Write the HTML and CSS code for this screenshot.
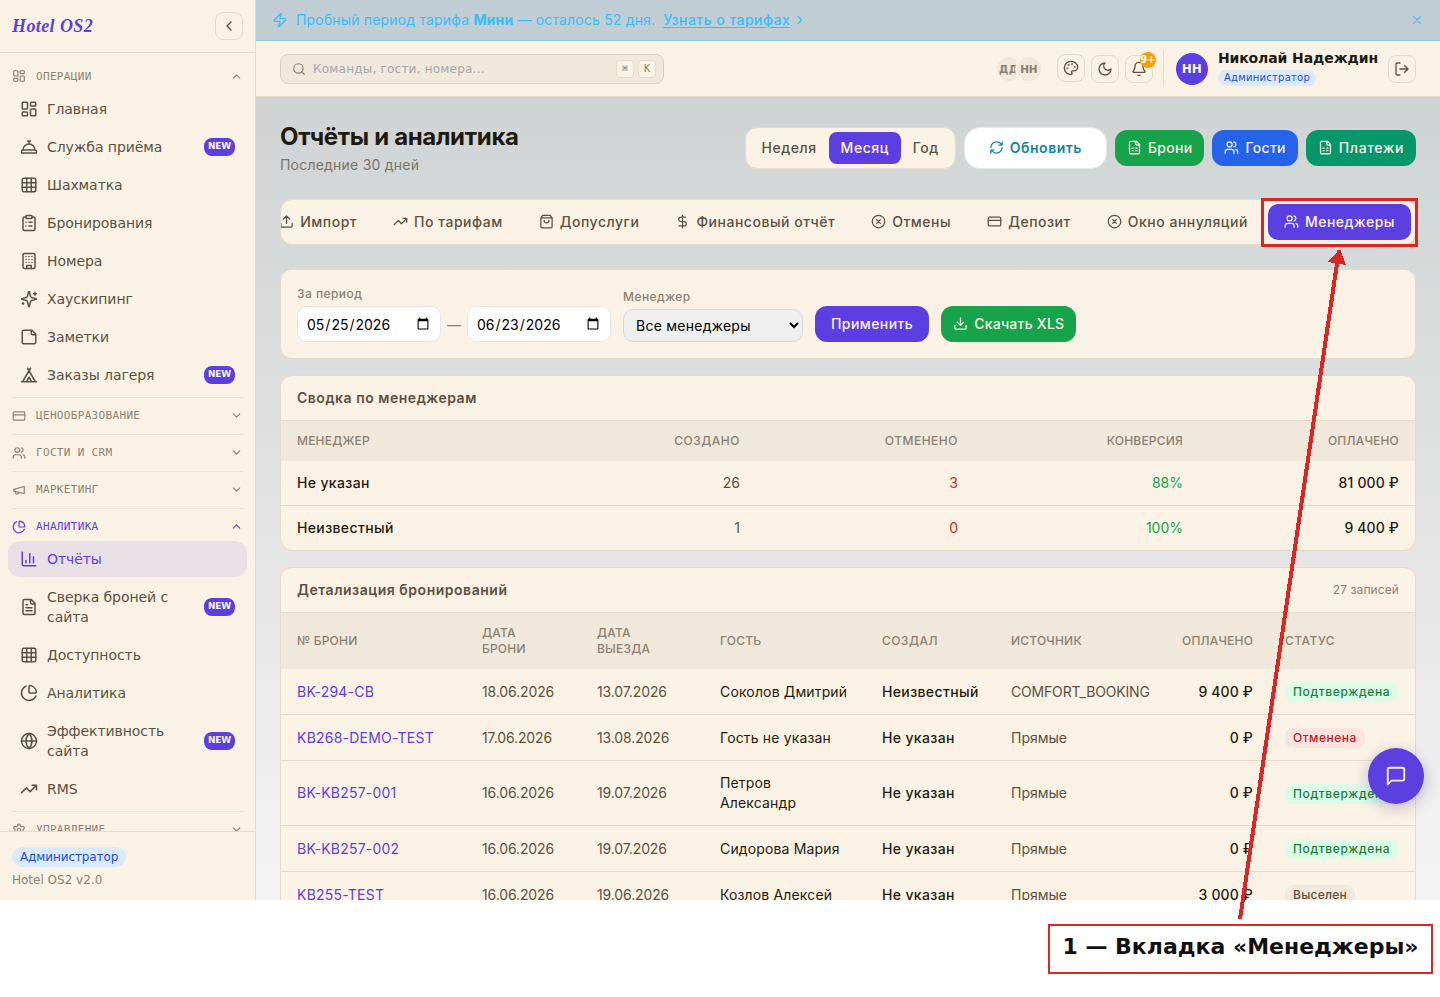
FILE: index.html
```html
<!DOCTYPE html>
<html lang="ru">
<head>
<meta charset="utf-8">
<title>Hotel OS2 — Отчёты и аналитика</title>
<link rel="stylesheet" href="styles.css">
</head>
<body>
<svg class="sprite" aria-hidden="true">
<symbol id="dash" viewBox="0 0 24 24"><rect width="7" height="9" x="3" y="3" rx="1"/><rect width="7" height="5" x="14" y="3" rx="1"/><rect width="7" height="9" x="14" y="12" rx="1"/><rect width="7" height="5" x="3" y="16" rx="1"/></symbol>
<symbol id="concierge" viewBox="0 0 24 24"><path d="M3 20a1 1 0 0 1-1-1v-1a2 2 0 0 1 2-2h16a2 2 0 0 1 2 2v1a1 1 0 0 1-1 1ZM20 16a8 8 0 1 0-16 0M12 4v4M10 4h4"/></symbol>
<symbol id="grid" viewBox="0 0 24 24"><rect width="18" height="18" x="3" y="3" rx="2"/><path d="M3 9h18M3 15h18M9 3v18M15 3v18"/></symbol>
<symbol id="clip" viewBox="0 0 24 24"><rect width="8" height="4" x="8" y="2" rx="1"/><path d="M16 4h2a2 2 0 0 1 2 2v14a2 2 0 0 1-2 2H6a2 2 0 0 1-2-2V6a2 2 0 0 1 2-2h2M12 11h4M12 16h4M8 11h.01M8 16h.01"/></symbol>
<symbol id="building" viewBox="0 0 24 24"><rect width="16" height="20" x="4" y="2" rx="2"/><path d="M9 22v-4h6v4M8 6h.01M16 6h.01M12 6h.01M12 10h.01M12 14h.01M16 10h.01M16 14h.01M8 10h.01M8 14h.01"/></symbol>
<symbol id="sparkles" viewBox="0 0 24 24"><path d="M9.937 15.5A2 2 0 0 0 8.5 14.063l-6.135-1.582a.5.5 0 0 1 0-.962L8.5 9.936A2 2 0 0 0 9.937 8.5l1.582-6.135a.5.5 0 0 1 .963 0L14.063 8.5A2 2 0 0 0 15.5 9.937l6.135 1.581a.5.5 0 0 1 0 .964L15.5 14.063a2 2 0 0 0-1.437 1.437l-1.582 6.135a.5.5 0 0 1-.963 0zM20 3v4M22 5h-4M4 17v2M5 18H3"/></symbol>
<symbol id="note" viewBox="0 0 24 24"><path d="M16 3H5a2 2 0 0 0-2 2v14a2 2 0 0 0 2 2h14a2 2 0 0 0 2-2V8ZM15 3v4a2 2 0 0 0 2 2h4"/></symbol>
<symbol id="tent" viewBox="0 0 24 24"><path d="M3.5 21 14 3M20.5 21 10 3M15.5 21 12 15l-3.5 6M2 21h20"/></symbol>
<symbol id="card" viewBox="0 0 24 24"><rect width="20" height="14" x="2" y="5" rx="2"/><path d="M2 10h20"/></symbol>
<symbol id="users" viewBox="0 0 24 24"><path d="M16 21v-2a4 4 0 0 0-4-4H6a4 4 0 0 0-4 4v2M22 21v-2a4 4 0 0 0-3-3.87M16 3.13a4 4 0 0 1 0 7.75"/><circle cx="9" cy="7" r="4"/></symbol>
<symbol id="mega" viewBox="0 0 24 24"><path d="m3 11 18-5v12L3 14v-3zM11.6 16.8a3 3 0 1 1-5.8-1.6"/></symbol>
<symbol id="pie" viewBox="0 0 24 24"><path d="M21 12c.552 0 1.005-.449.95-.998a10 10 0 0 0-8.953-8.951c-.55-.055-.998.398-.998.95v8a1 1 0 0 0 1 1zM21.21 15.89A10 10 0 1 1 8 2.83"/></symbol>
<symbol id="bars" viewBox="0 0 24 24"><path d="M3 3v16a2 2 0 0 0 2 2h16M18 17V9M13 17V5M8 17v-3"/></symbol>
<symbol id="doc" viewBox="0 0 24 24"><path d="M15 2H6a2 2 0 0 0-2 2v16a2 2 0 0 0 2 2h12a2 2 0 0 0 2-2V7ZM14 2v4a2 2 0 0 0 2 2h4M10 9H8M16 13H8M16 17H8"/></symbol>
<symbol id="sheet" viewBox="0 0 24 24"><path d="M15 2H6a2 2 0 0 0-2 2v16a2 2 0 0 0 2 2h12a2 2 0 0 0 2-2V7ZM14 2v4a2 2 0 0 0 2 2h4M8 13h2M14 13h2M8 17h2M14 17h2"/></symbol>
<symbol id="globe" viewBox="0 0 24 24"><circle cx="12" cy="12" r="10"/><path d="M12 2a14.5 14.5 0 0 0 0 20 14.5 14.5 0 0 0 0-20M2 12h20"/></symbol>
<symbol id="trend" viewBox="0 0 24 24"><path d="M22 7 13.5 15.5 8.5 10.5 2 17M16 7h6v6"/></symbol>
<symbol id="gear" viewBox="0 0 24 24"><path d="M12.22 2h-.44a2 2 0 0 0-2 2v.18a2 2 0 0 1-1 1.73l-.43.25a2 2 0 0 1-2 0l-.15-.08a2 2 0 0 0-2.73.73l-.22.38a2 2 0 0 0 .73 2.73l.15.1a2 2 0 0 1 1 1.72v.51a2 2 0 0 1-1 1.74l-.15.09a2 2 0 0 0-.73 2.73l.22.38a2 2 0 0 0 2.73.73l.15-.08a2 2 0 0 1 2 0l.43.25a2 2 0 0 1 1 1.73V20a2 2 0 0 0 2 2h.44a2 2 0 0 0 2-2v-.18a2 2 0 0 1 1-1.73l.43-.25a2 2 0 0 1 2 0l.15.08a2 2 0 0 0 2.73-.73l.22-.39a2 2 0 0 0-.73-2.73l-.15-.08a2 2 0 0 1-1-1.74v-.5a2 2 0 0 1 1-1.74l.15-.09a2 2 0 0 0 .73-2.73l-.22-.38a2 2 0 0 0-2.73-.73l-.15.08a2 2 0 0 1-2 0l-.43-.25a2 2 0 0 1-1-1.73V4a2 2 0 0 0-2-2z"/><circle cx="12" cy="12" r="3"/></symbol>
<symbol id="zap" viewBox="0 0 24 24"><path d="M4 14a1 1 0 0 1-.78-1.63l9.9-10.2a.5.5 0 0 1 .86.46l-1.92 6.02A1 1 0 0 0 13 10h7a1 1 0 0 1 .78 1.63l-9.9 10.2a.5.5 0 0 1-.86-.46l1.92-6.02A1 1 0 0 0 11 14z"/></symbol>
<symbol id="palette" viewBox="0 0 24 24"><circle cx="13.5" cy="6.5" r=".5"/><circle cx="17.5" cy="10.5" r=".5"/><circle cx="8.5" cy="7.5" r=".5"/><circle cx="6.5" cy="12.5" r=".5"/><path d="M12 2C6.5 2 2 6.5 2 12s4.5 10 10 10c.926 0 1.648-.746 1.648-1.688 0-.437-.18-.835-.437-1.125-.29-.289-.438-.652-.438-1.125a1.64 1.64 0 0 1 1.668-1.668h1.996c3.051 0 5.555-2.503 5.555-5.554C21.965 6.012 17.461 2 12 2z"/></symbol>
<symbol id="moon" viewBox="0 0 24 24"><path d="M12 3a6 6 0 0 0 9 9 9 9 0 1 1-9-9Z"/></symbol>
<symbol id="bell" viewBox="0 0 24 24"><path d="M10.268 21a2 2 0 0 0 3.464 0M3.262 15.326A1 1 0 0 0 4 17h16a1 1 0 0 0 .74-1.673C19.41 13.956 18 12.499 18 8A6 6 0 0 0 6 8c0 4.499-1.411 5.956-2.738 7.326"/></symbol>
<symbol id="logout" viewBox="0 0 24 24"><path d="M9 21H5a2 2 0 0 1-2-2V5a2 2 0 0 1 2-2h4M16 17l5-5-5-5M21 12H9"/></symbol>
<symbol id="refresh" viewBox="0 0 24 24"><path d="M3 12a9 9 0 0 1 9-9 9.75 9.75 0 0 1 6.74 2.74L21 8M21 3v5h-5M21 12a9 9 0 0 1-9 9 9.75 9.75 0 0 1-6.74-2.74L3 16M8 16H3v5"/></symbol>
<symbol id="upload" viewBox="0 0 24 24"><path d="M21 15v4a2 2 0 0 1-2 2H5a2 2 0 0 1-2-2v-4M17 8l-5-5-5 5M12 3v12"/></symbol>
<symbol id="download" viewBox="0 0 24 24"><path d="M21 15v4a2 2 0 0 1-2 2H5a2 2 0 0 1-2-2v-4M7 10l5 5 5-5M12 15V3"/></symbol>
<symbol id="bag" viewBox="0 0 24 24"><path d="M6 2 3 6v14a2 2 0 0 0 2 2h14a2 2 0 0 0 2-2V6l-3-4ZM3 6h18M16 10a4 4 0 0 1-8 0"/></symbol>
<symbol id="dollar" viewBox="0 0 24 24"><path d="M12 2v20M17 5H9.5a3.5 3.5 0 0 0 0 7h5a3.5 3.5 0 0 1 0 7H6"/></symbol>
<symbol id="cx" viewBox="0 0 24 24"><circle cx="12" cy="12" r="10"/><path d="m15 9-6 6M9 9l6 6"/></symbol>
<symbol id="msg" viewBox="0 0 24 24"><path d="M21 15a2 2 0 0 1-2 2H7l-4 4V5a2 2 0 0 1 2-2h14a2 2 0 0 1 2 2z"/></symbol>
<symbol id="search" viewBox="0 0 24 24"><circle cx="11" cy="11" r="8"/><path d="m21 21-4.3-4.3"/></symbol>
<symbol id="x" viewBox="0 0 24 24"><path d="M18 6 6 18M6 6l12 12"/></symbol>
<symbol id="left" viewBox="0 0 24 24"><path d="m15 18-6-6 6-6"/></symbol>
<symbol id="right" viewBox="0 0 24 24"><path d="m9 18 6-6-6-6"/></symbol>
<symbol id="up" viewBox="0 0 24 24"><path d="m18 15-6-6-6 6"/></symbol>
<symbol id="down" viewBox="0 0 24 24"><path d="m6 9 6 6 6-6"/></symbol>
</svg>

<div class="app">
<aside class="sidebar">
  <div class="brand"><span class="logo">Hotel OS2</span><button class="sq"><svg class="i16"><use href="#left"/></svg></button></div>
  <nav class="nav">
    <section class="group">
      <h3 class="group-title"><svg class="i14"><use href="#dash"/></svg><span>ОПЕРАЦИИ</span><svg class="i13"><use href="#up"/></svg></h3>
      <a class="item"><svg class="i18"><use href="#dash"/></svg><span>Главная</span></a>
      <a class="item"><svg class="i18"><use href="#concierge"/></svg><span>Служба приёма</span><b class="new">NEW</b></a>
      <a class="item"><svg class="i18"><use href="#grid"/></svg><span>Шахматка</span></a>
      <a class="item"><svg class="i18"><use href="#clip"/></svg><span>Бронирования</span></a>
      <a class="item"><svg class="i18"><use href="#building"/></svg><span>Номера</span></a>
      <a class="item"><svg class="i18"><use href="#sparkles"/></svg><span>Хаускипинг</span></a>
      <a class="item"><svg class="i18"><use href="#note"/></svg><span>Заметки</span></a>
      <a class="item"><svg class="i18"><use href="#tent"/></svg><span>Заказы лагеря</span><b class="new">NEW</b></a>
    </section>
    <section class="group second"><h3 class="group-title"><svg class="i14"><use href="#card"/></svg><span>ЦЕНООБРАЗОВАНИЕ</span><svg class="i13"><use href="#down"/></svg></h3></section>
    <section class="group"><h3 class="group-title"><svg class="i14"><use href="#users"/></svg><span>ГОСТИ И CRM</span><svg class="i13"><use href="#down"/></svg></h3></section>
    <section class="group"><h3 class="group-title"><svg class="i14"><use href="#mega"/></svg><span>МАРКЕТИНГ</span><svg class="i13"><use href="#down"/></svg></h3></section>
    <section class="group">
      <h3 class="group-title current"><svg class="i14"><use href="#pie"/></svg><span>АНАЛИТИКА</span><svg class="i13"><use href="#up"/></svg></h3>
      <a class="item active"><svg class="i18"><use href="#bars"/></svg><span>Отчёты</span></a>
      <a class="item"><svg class="i18"><use href="#doc"/></svg><span>Сверка броней с сайта</span><b class="new">NEW</b></a>
      <a class="item"><svg class="i18"><use href="#grid"/></svg><span>Доступность</span></a>
      <a class="item"><svg class="i18"><use href="#pie"/></svg><span>Аналитика</span></a>
      <a class="item"><svg class="i18"><use href="#globe"/></svg><span>Эффективность сайта</span><b class="new">NEW</b></a>
      <a class="item"><svg class="i18"><use href="#trend"/></svg><span>RMS</span></a>
    </section>
    <section class="group last"><h3 class="group-title"><svg class="i14"><use href="#gear"/></svg><span>УПРАВЛЕНИЕ</span><svg class="i13"><use href="#down"/></svg></h3></section>
  </nav>
  <footer class="side-foot"><span class="role">Администратор</span><span class="version">Hotel OS2 v2.0</span></footer>
</aside>

<div class="main">
  <div class="trial"><svg class="i16"><use href="#zap"/></svg><span class="trial-text">Пробный период тарифа <b>Мини</b> — осталось 52 дня.</span><a class="trial-link">Узнать о тарифах</a><svg class="i14 trial-arrow"><use href="#right"/></svg><svg class="i14 trial-close"><use href="#x"/></svg></div>
  <header class="topbar">
    <div class="search"><svg class="i14"><use href="#search"/></svg><span>Команды, гости, номера...</span><kbd>⌘</kbd><kbd>K</kbd></div>
    <div class="online"><i>ДД</i><i>НН</i></div>
    <button class="sq lift"><svg class="i16"><use href="#palette"/></svg></button>
    <button class="sq"><svg class="i16"><use href="#moon"/></svg></button>
    <button class="sq bell"><svg class="i16"><use href="#bell"/></svg><b class="count">9+</b></button>
    <div class="user"><span class="avatar">НН</span><div class="who"><strong>Николай Надеждин</strong><span class="role small">Администратор</span></div></div>
    <button class="sq"><svg class="i16"><use href="#logout"/></svg></button>
  </header>

  <main class="content">
    <div class="page-head">
      <div class="titles"><h1>Отчёты и аналитика</h1><p>Последние 30 дней</p></div>
      <div class="period"><span>Неделя</span><span class="on">Месяц</span><span>Год</span></div>
      <button class="btn refresh"><svg class="i15"><use href="#refresh"/></svg>Обновить</button>
      <button class="btn green"><svg class="i15"><use href="#sheet"/></svg>Брони</button>
      <button class="btn blue"><svg class="i15"><use href="#users"/></svg>Гости</button>
      <button class="btn teal"><svg class="i15"><use href="#sheet"/></svg>Платежи</button>
    </div>

    <div class="tabs">
      <a class="tab"><svg class="i15"><use href="#upload"/></svg>Импорт</a>
      <a class="tab"><svg class="i15"><use href="#trend"/></svg>По тарифам</a>
      <a class="tab"><svg class="i15"><use href="#bag"/></svg>Допуслуги</a>
      <a class="tab"><svg class="i15"><use href="#dollar"/></svg>Финансовый отчёт</a>
      <a class="tab"><svg class="i15"><use href="#cx"/></svg>Отмены</a>
      <a class="tab"><svg class="i15"><use href="#card"/></svg>Депозит</a>
      <a class="tab"><svg class="i15"><use href="#cx"/></svg>Окно аннуляций</a>
      <a class="tab on"><svg class="i15"><use href="#users"/></svg>Менеджеры</a>
    </div>

    <div class="card filters">
      <div class="field"><label>За период</label><div class="range"><input type="date" value="2026-05-25"><span>—</span><input type="date" value="2026-06-23"></div></div>
      <div class="field manager"><label>Менеджер</label><select><option>Все менеджеры</option></select></div>
      <button class="btn primary">Применить</button>
      <button class="btn green xls"><svg class="i15"><use href="#download"/></svg>Скачать XLS</button>
    </div>

    <div class="card">
      <div class="card-head"><h2>Сводка по менеджерам</h2></div>
      <table class="summary">
        <colgroup><col class="s1"><col class="s2"><col class="s3"><col class="s4"><col></colgroup>
        <thead><tr><th>МЕНЕДЖЕР</th><th class="r wide">СОЗДАНО</th><th class="r wide">ОТМЕНЕНО</th><th class="r">КОНВЕРСИЯ</th><th class="r">ОПЛАЧЕНО</th></tr></thead>
        <tbody>
          <tr><td class="strong">Не указан</td><td class="r">26</td><td class="r red">3</td><td class="r ok">88%</td><td class="r sum">81 000 ₽</td></tr>
          <tr><td class="strong">Неизвестный</td><td class="r">1</td><td class="r red">0</td><td class="r ok">100%</td><td class="r sum">9 400 ₽</td></tr>
        </tbody>
      </table>
    </div>

    <div class="card">
      <div class="card-head"><h2>Детализация бронирований</h2><span>27 записей</span></div>
      <table class="detail">
        <colgroup><col class="d1"><col class="d2"><col class="d3"><col class="d4"><col class="d5"><col class="d6"><col class="d7"><col></colgroup>
        <thead><tr><th>№ БРОНИ</th><th>ДАТА<br>БРОНИ</th><th>ДАТА<br>ВЫЕЗДА</th><th>ГОСТЬ</th><th class="wide">СОЗДАЛ</th><th>ИСТОЧНИК</th><th class="r">ОПЛАЧЕНО</th><th class="wide">СТАТУС</th></tr></thead>
        <tbody>
          <tr><td class="code">BK-294-CB</td><td class="date">18.06.2026</td><td class="date">13.07.2026</td><td class="guest">Соколов Дмитрий</td><td class="strong">Неизвестный</td><td class="source">COMFORT_BOOKING</td><td class="r sum">9 400 ₽</td><td><span class="tag good">Подтверждена</span></td></tr>
          <tr><td class="code">KB268-DEMO-TEST</td><td class="date">17.06.2026</td><td class="date">13.08.2026</td><td class="guest">Гость не указан</td><td class="strong">Не указан</td><td>Прямые</td><td class="r sum">0 ₽</td><td><span class="tag bad">Отменена</span></td></tr>
          <tr><td class="code">BK-KB257-001</td><td class="date">16.06.2026</td><td class="date">19.07.2026</td><td class="guest">Петров<br>Александр</td><td class="strong">Не указан</td><td>Прямые</td><td class="r sum">0 ₽</td><td><span class="tag good">Подтверждена</span></td></tr>
          <tr><td class="code">BK-KB257-002</td><td class="date">16.06.2026</td><td class="date">19.07.2026</td><td class="guest">Сидорова Мария</td><td class="strong">Не указан</td><td>Прямые</td><td class="r sum">0 ₽</td><td><span class="tag good">Подтверждена</span></td></tr>
          <tr><td class="code">KB255-TEST</td><td class="date">16.06.2026</td><td class="date">19.06.2026</td><td class="guest">Козлов Алексей</td><td class="strong">Не указан</td><td>Прямые</td><td class="r sum">3 000 ₽</td><td><span class="tag out">Выселен</span></td></tr>
        </tbody>
      </table>
    </div>
  </main>
</div>
<button class="chat"><svg><use href="#msg"/></svg></button>
</div>

<svg class="callout-lines" width="1440" height="997" shape-rendering="crispEdges">
  <rect x="1262.5" y="199.5" width="154" height="46"/>
  <path d="M1240 919 1339 250"/>
  <path class="head" d="M1340 249 1328 262 1346 265Z"/>
</svg>
<div class="callout">1 — Вкладка «Менеджеры»</div>
</body>
</html>
```

FILE: styles.css
```css
* { box-sizing: border-box; }
body { margin: 0; background: #fff; font-family: "DejaVu Sans", sans-serif; color: #1f1a10; }
h1, h2, h3, p { margin: 0; }
button { font: inherit; padding: 0; border: 0; }
svg { fill: none; stroke: currentColor; stroke-width: 2; stroke-linecap: round; stroke-linejoin: round; flex: none; }
.sprite { display: none; }
.i13 { width: 13px; height: 13px; }
.i14 { width: 14px; height: 14px; }
.i15 { width: 15px; height: 15px; }
.i16 { width: 16px; height: 16px; }
.i18 { width: 18px; height: 18px; }

.app { position: relative; display: flex; height: 900px; overflow: hidden; background: linear-gradient(180deg, #cccfd1 0, #d5d8d8 220px, #e5e5e5 560px, #f4f4f4 900px); }

.sidebar { width: 256px; flex: none; display: flex; flex-direction: column; background: #faf3e5; border-right: 1px solid #e3dac9; }
.brand { height: 53px; flex: none; display: flex; align-items: center; justify-content: space-between; padding: 0 12px; border-bottom: 1px solid #e3dac9; }
.logo { font: italic bold 18px "Liberation Serif", serif; letter-spacing: .4px; color: #5b3fe0; }
.sq { width: 28px; height: 28px; flex: none; display: flex; align-items: center; justify-content: center; border: 1px solid #e3dac9; border-radius: 8px; background: #faf3e5; color: #5a5142; }
.nav { flex: 1; min-height: 0; overflow: hidden; padding: 5px 8px 0; }
.group { display: flex; flex-direction: column; gap: 2px; }
.group-title { display: flex; align-items: center; gap: 10px; height: 36px; margin: 0 4px -2px; border-top: 1px solid #ece3d3; font: 11px "DejaVu Sans Mono", monospace; letter-spacing: .33px; color: #8a8171; }
.group:first-child .group-title { border-color: transparent; height: 35px; margin-bottom: -4px; }
.group-title span { flex: 1; }
.group + .group { margin-top: 3px; }
.group + .second, .group + .last { margin-top: 4px; }
.group .current { color: #5b3fe0; margin-bottom: -5px; }
.item { display: flex; align-items: center; min-height: 36px; padding: 8px 12px; gap: 9px; border-radius: 12px; font-size: 14px; line-height: 20px; letter-spacing: -.07px; color: #5a5142; }
.item span { flex: 1; }
.item.active { background: #e9e0e6; color: #5b3fe0; }
.new { width: 31px; height: 18px; border-radius: 8px; background: #5b3fe0; color: #faf3e5; font: bold 9px/16px "DejaVu Sans", sans-serif; letter-spacing: -.2px; text-align: center; }
.side-foot { height: 69px; flex: none; padding: 15px 12px 0; display: flex; flex-direction: column; align-items: flex-start; gap: 5px; border-top: 1px solid #e3dac9; }
.role { height: 20px; padding: 0 8px; border-radius: 10px; background: #dbeafe; color: #1d4ed8; font-size: 12px; line-height: 20px; letter-spacing: -.1px; }
.version { font-size: 12px; line-height: 16px; color: #8a8171; }

.main { flex: 1; min-width: 0; display: flex; flex-direction: column; }
.trial { height: 41px; flex: none; display: flex; align-items: center; padding: 0 16px 1px; background: #c0cdd4; border-bottom: 1px solid #8cc8e2; color: #38bdf8; font: 14px "Inter", sans-serif; letter-spacing: .17px; }
.trial-text { margin: 0 8px; }
.trial-link { font-weight: 500; letter-spacing: .46px; text-decoration: underline; text-underline-offset: 2px; }
.trial-arrow { margin-left: 3px; }
.trial-close { margin-left: auto; opacity: .8; }
.topbar { height: 56px; flex: none; display: flex; align-items: center; padding: 0 24px; background: #faf3e5; border-bottom: 1px solid #e3dac9; }
.search { width: 384px; height: 30px; display: flex; align-items: center; gap: 4px; padding: 0 7px 0 11px; border: 1px solid #d8cfc0; border-radius: 8px; background: #f0e8db; color: #8a8171; font-size: 12px; letter-spacing: .22px; }
.search span { flex: 1; margin-left: 3px; color: #a3a7ad; }
kbd { width: 18px; height: 18px; border: 1px solid #e3dac9; border-radius: 4px; background: #faf3e5; font: 10px/16px "DejaVu Sans Mono", monospace; letter-spacing: 0; text-align: center; }
.online { display: flex; margin: 0 16px 0 auto; }
.online i { width: 24px; height: 24px; border-radius: 50%; background: #f0e8db; color: #8a8171; font: bold 10.5px/24px "DejaVu Sans", sans-serif; letter-spacing: .4px; text-align: center; }
.online i + i { margin-left: -4px; letter-spacing: -.2px; box-shadow: 0 0 0 2px #faf3e5; }
.topbar .sq { margin-right: 6px; }
.topbar .lift { margin-bottom: 2px; }
.bell { position: relative; }
.count { position: absolute; top: -4px; right: -4px; width: 16px; height: 16px; border-radius: 50%; background: #f59e0b; color: #fff; font: bold 10px/15px "DejaVu Sans", sans-serif; text-align: center; }
.user { display: flex; align-items: center; gap: 10px; height: 37px; margin-left: 4px; margin-right: 10px; padding-left: 12px; border-left: 1px solid #e3dac9; }
.avatar { width: 32px; height: 32px; border-radius: 50%; background: #5b3fe0; color: #faf3e5; font: bold 12px/32px "DejaVu Sans", sans-serif; text-align: center; }
.who { display: flex; flex-direction: column; align-items: flex-start; }
.who strong { font-size: 14px; line-height: 20px; letter-spacing: -.1px; margin-top: -3px; }
.role.small { height: 16px; padding: 0 6px; font-size: 10px; line-height: 16px; letter-spacing: .25px; margin-top: 2px; }
.topbar .sq:last-child { margin-right: 0; }

.content { flex: 1; min-height: 0; overflow: hidden; padding: 24px 24px 0; font-family: "Inter", sans-serif; font-size: 14px; }
.page-head { display: flex; align-items: center; height: 54px; gap: 8px; }
.titles { flex: 1; }
.titles h1 { font-size: 24px; line-height: 32px; font-weight: 700; letter-spacing: -.34px; }
.titles p { line-height: 20px; margin-top: 2px; letter-spacing: .22px; color: #7a7466; }
.period { display: flex; height: 42px; padding: 4px; border: 1px solid #e3dac9; border-radius: 12px; background: #faf3e5; color: #5a5142; font-weight: 500; letter-spacing: .52px; }
.period span { padding: 0 12px; line-height: 32px; border-radius: 8px; }
.period .on { background: #5b3fe0; color: #faf3e5; }
.btn { display: flex; align-items: center; gap: 6px; height: 36px; padding: 0 12px 1px; border-radius: 12px; color: #faf3e5; font-weight: 500; letter-spacing: .3px; }
.refresh { height: 42px; padding: 0 24px 1px; border: 1px solid #e5e7eb; border-radius: 16px; background: #fff; color: #0e87a0; font-weight: 600; letter-spacing: .5px; }
.green { background: #16a34a; }
.blue { background: #2563eb; }
.teal { background: #059669; letter-spacing: .6px; }
.primary { background: #5b3fe0; padding: 0 16px 1px; letter-spacing: .42px; }
.xls { letter-spacing: .24px; }
.tabs { display: flex; justify-content: flex-end; height: 46px; margin: 24px 0; padding: 4px; border: 1px solid #e3dac9; border-radius: 12px; background: #faf3e5; overflow: hidden; gap: 4px; }
.tab { display: flex; align-items: center; gap: 6px; height: 36px; padding: 0 16px 1px; border-radius: 10px; flex: none; color: #5a5142; font-weight: 500; letter-spacing: .52px; }
.tab.on { background: #5b3fe0; color: #faf3e5; }

.card { margin-bottom: 16px; border: 1px solid #e3dac9; border-radius: 12px; background: #faf3e5; overflow: hidden; }
.filters { height: 90px; display: flex; align-items: flex-end; gap: 12px; padding: 0 16px 16px; }
.field { display: flex; flex-direction: column; gap: 4px; }
.field label { font-size: 12px; line-height: 16px; letter-spacing: .45px; color: #8a8171; font-weight: 500; }
.range { display: flex; align-items: center; gap: 6px; color: #8a8171; }
input { width: 144px; height: 36px; padding: 0 8px; border: 1px solid #e5e7eb; border-radius: 10px; background: #fff; font: 14px "Inter", sans-serif; color: #000; }
select { width: 180px; height: 33px; padding: 0 8px; border: 1px solid #d8d8dc; border-radius: 10px; background: #efefef; font: 14px "Inter", sans-serif; letter-spacing: .25px; color: #000; }
.card-head { height: 44px; display: flex; align-items: center; justify-content: space-between; padding: 0 16px 1px; }
.card-head h2 { font-size: 14px; font-weight: 600; letter-spacing: .52px; color: #5a5142; }
.card-head span { font-size: 12px; letter-spacing: .1px; color: #8a8171; }
table { width: 1134px; table-layout: fixed; border-collapse: separate; border-spacing: 0; line-height: 20px; color: #5a5142; }
th { padding: 12px 16px; border-top: 1px solid #e3dac9; background: #f0e8db; text-align: left; font-size: 12px; line-height: 16px; font-weight: 500; letter-spacing: .2px; color: #8a8171; }
th.wide { letter-spacing: .5px; }
td { padding: 12px 16px; white-space: nowrap; }
tr + tr td { border-top: 1px solid #e3dac9; }
.r { text-align: right; }
.strong { color: #1f1a10; font-weight: 500; letter-spacing: .36px; }
.sum { color: #1f1a10; font-weight: 500; letter-spacing: .15px; }
.date { letter-spacing: -.12px; }
.source { letter-spacing: -.18px; }
.guest { color: #1f1a10; letter-spacing: .15px; }
.red { color: #dc2626; }
.ok { color: #16a34a; }
.code { color: #5b3fe0; letter-spacing: .22px; }
.s1 { width: 300px; } .s2 { width: 175px; } .s3 { width: 218px; } .s4 { width: 225px; }
.detail td { height: 46px; }
.detail tr:first-child td { height: 45px; }
.d1 { width: 185px; } .d2 { width: 115px; } .d3 { width: 123px; } .d4 { width: 162px; } .d5 { width: 129px; } .d6 { width: 171px; } .d7 { width: 103px; }
.tag { display: inline-block; height: 20px; padding: 0 8px; border-radius: 8px; background: #f0e8db; color: #5a5142; font-size: 12px; font-weight: 500; letter-spacing: .64px; }
.good { background: #dcfce7; color: #15803d; }
.bad { background: #fee2e2; color: #b91c1c; letter-spacing: .5px; }
.out { letter-spacing: .25px; }
.chat { position: absolute; left: 1368px; top: 748px; width: 56px; height: 56px; display: flex; align-items: center; justify-content: center; border-radius: 50%; background: #5b3fe0; color: #faf3e5; box-shadow: 0 4px 16px rgba(60, 40, 120, .3); }
.chat svg { width: 22px; height: 22px; }

.callout-lines { position: absolute; left: 0; top: 0; stroke: #dc2626; stroke-width: 3; stroke-linecap: butt; stroke-linejoin: miter; }
.callout-lines path { stroke-width: 4; }
.callout-lines .head { fill: #dc2626; stroke: none; }
.callout { position: absolute; left: 1048px; top: 924px; width: 385px; height: 50px; border: 2px solid #dc2626; background: #fff; color: #111; font: bold 22px/42px "DejaVu Sans", sans-serif; text-align: center; white-space: nowrap; }
```
